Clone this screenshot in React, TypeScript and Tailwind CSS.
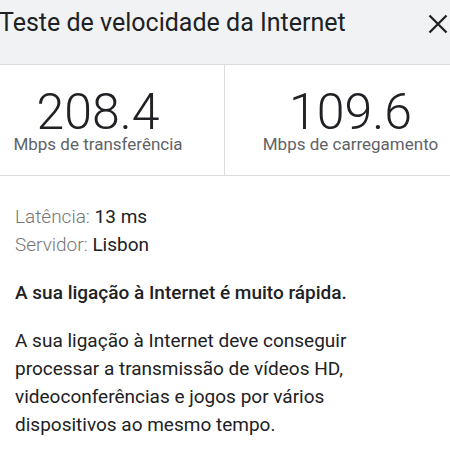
import React from "react";

export default function App() {
  return (
    <div className="w-[450px] h-[450px] overflow-hidden bg-white" style={{ fontFamily: "Roboto, 'Noto Sans', sans-serif" }}>
      <div className="h-[65px] bg-[#f1f2f4] border-b border-[#dadce0] flex items-start justify-between pt-[7px]">
        <div className="text-[25px] leading-[32px] text-[#202124] ml-[-1px] whitespace-nowrap">Teste de velocidade da Internet</div>
        <svg width="20" height="20" viewBox="0 0 20 20" className="mt-[7px] mr-[2px] shrink-0">
          <path d="M1.5 1.5 L18.5 18.5 M18.5 1.5 L1.5 18.5" stroke="#202124" strokeWidth="2.3" />
        </svg>
      </div>
      <div className="flex h-[111px] w-[504px] ml-[-28px] border-b border-[#dadce0]">
        <div className="w-[253px] border-r border-[#dadce0] flex flex-col items-center pt-[22px]">
          <div className="text-[50px] leading-[50px] font-light text-[#202124]">208.4</div>
          <div className="text-[17px] leading-[14px] text-[#5f6368] whitespace-nowrap">Mbps de transferência</div>
        </div>
        <div className="w-[251px] flex flex-col items-center pt-[22px]">
          <div className="text-[50px] leading-[50px] font-light text-[#202124]">109.6</div>
          <div className="text-[17px] leading-[14px] text-[#5f6368] whitespace-nowrap">Mbps de carregamento</div>
        </div>
      </div>
      <div className="px-[15px] pt-[27px] text-[19px] text-[#202124]">
        <div className="leading-[28px] whitespace-nowrap"><span className="text-[#757575] font-light">Latência:</span> 13 ms</div>
        <div className="leading-[28px] whitespace-nowrap"><span className="text-[#757575] font-light">Servidor:</span> Lisbon</div>
        <div className="leading-[28px] font-medium mt-[20px] whitespace-nowrap">A sua ligação à Internet é muito rápida.</div>
        <div className="leading-[28px] mt-[20px] whitespace-nowrap">
          A sua ligação à Internet deve conseguir<br />
          processar a transmissão de vídeos HD,<br />
          videoconferências e jogos por vários<br />
          dispositivos ao mesmo tempo.
        </div>
      </div>
    </div>
  );
}
